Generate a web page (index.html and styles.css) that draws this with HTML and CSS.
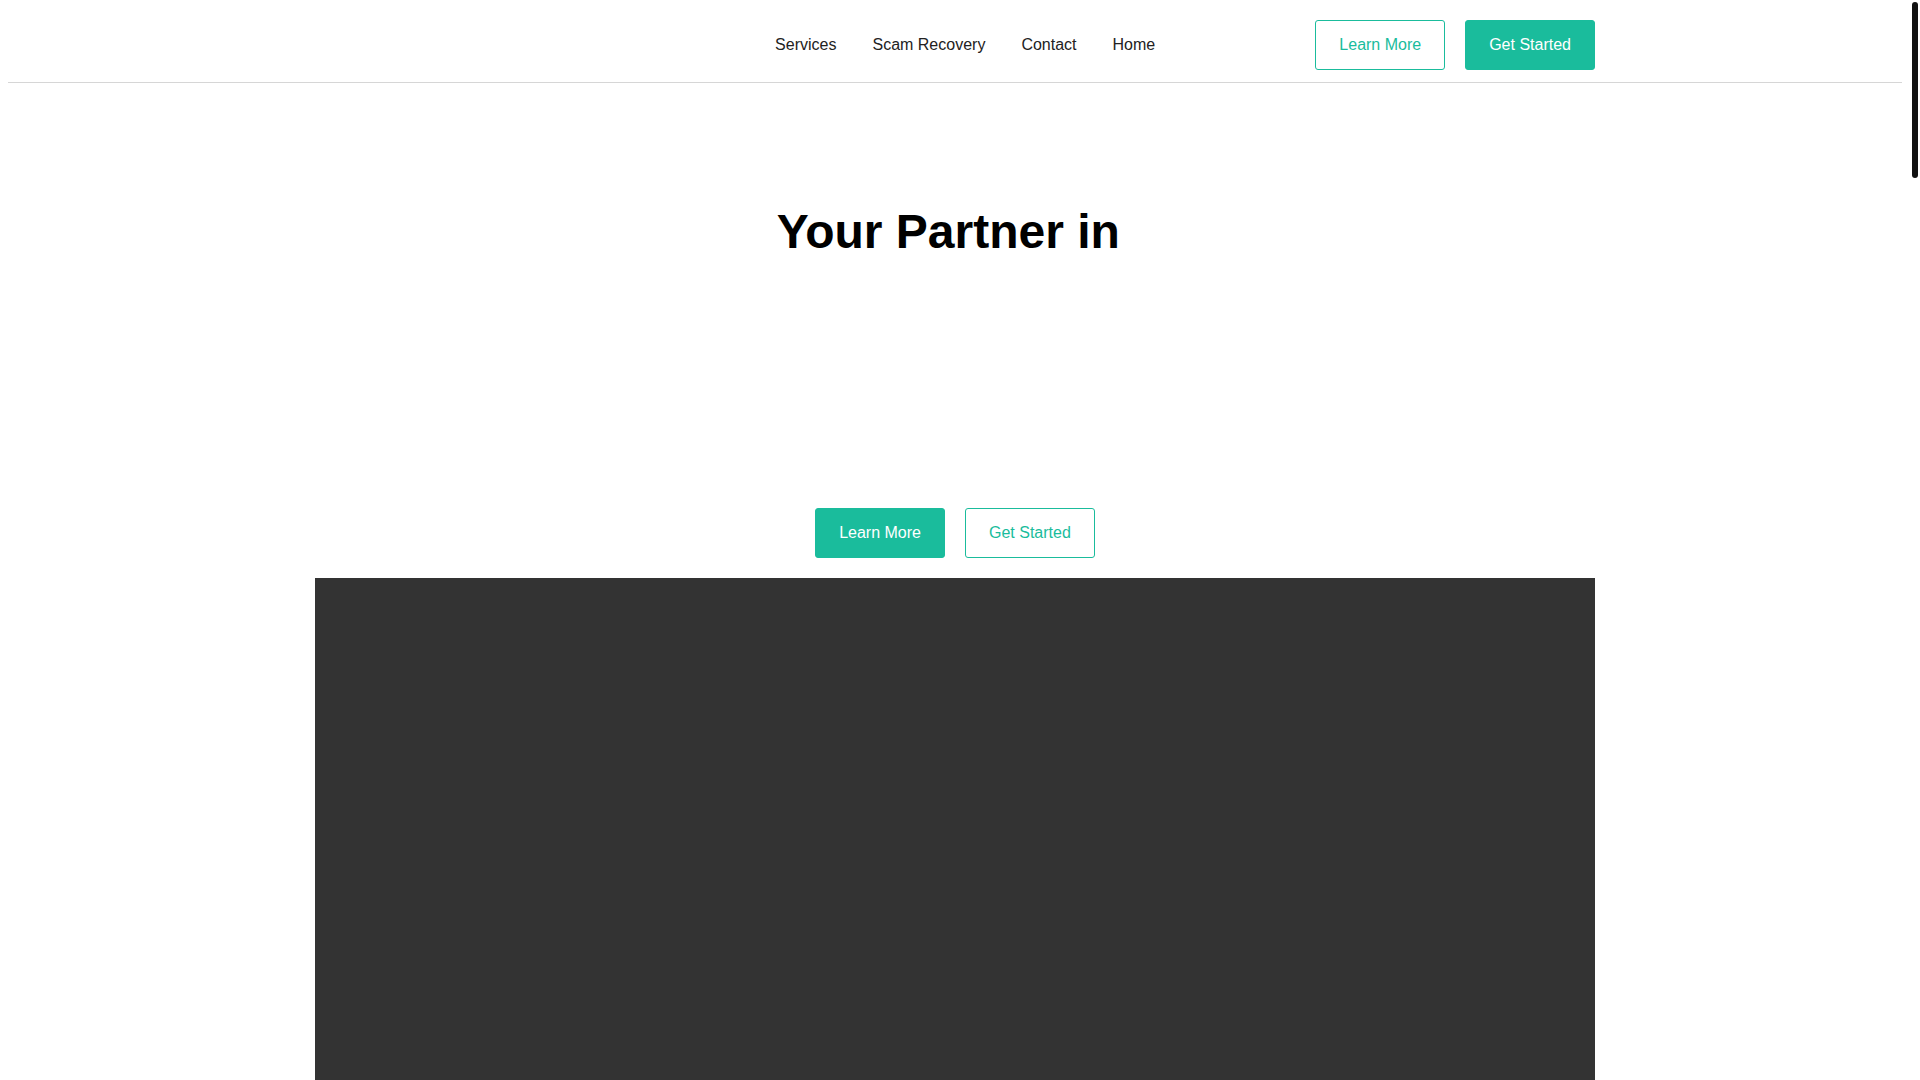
FILE: index.html
```html
<!DOCTYPE html>
<html lang="en">
<head>
<meta charset="utf-8">
<title>Your Partner in</title>
<link rel="stylesheet" href="styles.css">
</head>
<body>
<div class="scroll-thumb" aria-hidden="true"></div>
<header class="site-header">
  <div class="container header-inner">
    <div class="logo"></div>
    <nav class="main-nav">
      <a href="#" class="nav-link">Services</a>
      <a href="#" class="nav-link">Scam Recovery</a>
      <a href="#" class="nav-link">Contact</a>
      <a href="#" class="nav-link">Home</a>
    </nav>
    <div class="header-actions">
      <a href="#" class="btn btn-outline">Learn More</a>
      <a href="#" class="btn btn-solid">Get Started</a>
    </div>
  </div>
</header>
<main>
  <section class="hero container">
    <h1 class="hero-title">Your Partner in <span class="typed"></span></h1>
    <div class="hero-actions">
      <a href="#" class="btn btn-solid">Learn More</a>
      <a href="#" class="btn btn-outline">Get Started</a>
    </div>
    <div class="hero-media"></div>
  </section>
</main>
</body>
</html>
```

FILE: styles.css
```css
body {
  margin: 8px 18px 8px 8px;
  font-family: "Liberation Sans", Arial, sans-serif;
  color: #222;
  background: #fff;
}

a {
  text-decoration: none;
}

.scroll-thumb {
  position: fixed;
  top: 2px;
  right: 2px;
  width: 6px;
  height: 176px;
  background: #111;
  border-radius: 3px;
}

.container {
  width: 1280px;
  margin: 0 auto;
}

.site-header {
  padding: 12px 0;
  border-bottom: 1px solid #d6d6d6;
}

.header-inner {
  display: flex;
  align-items: center;
  justify-content: space-between;
}

.logo {
  width: 300px;
  height: 50px;
}

.main-nav {
  display: flex;
  gap: 36px;
}

.nav-link {
  color: #222;
  font-size: 16px;
  line-height: 18px;
}

.header-actions {
  display: flex;
  gap: 20px;
}

.btn {
  display: inline-block;
  font-size: 16px;
  line-height: 18px;
  padding: 15px 23px;
  border: 1px solid #1abc9c;
  border-radius: 3px;
  white-space: nowrap;
}

.btn-solid {
  background: #1abc9c;
  color: #fff;
}

.btn-outline {
  background: #fff;
  color: #1abc9c;
}

.hero {
  display: flex;
  flex-direction: column;
  align-items: center;
}

.hero-title {
  margin: 121px 0 0;
  font-size: 48px;
  font-weight: 700;
  color: #000;
  text-align: center;
}

.typed {
  display: inline-block;
}

.hero-actions {
  display: flex;
  gap: 20px;
  margin-top: 249px;
}

.hero-media {
  width: 1280px;
  height: 720px;
  margin-top: 20px;
  background: #333;
}
```
